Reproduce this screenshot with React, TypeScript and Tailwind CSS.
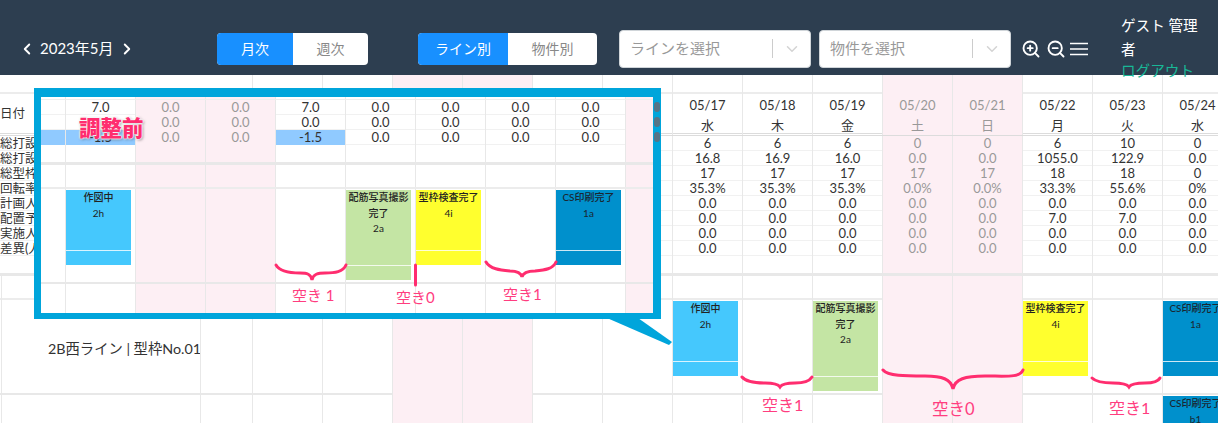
import { ChevronDown, ChevronLeft, ChevronRight, ZoomIn, ZoomOut } from 'lucide-react';
import type { ReactNode } from 'react';

const WEEKEND = [2, 3, 9, 10];

const rowLabels = ['総打設数', '総打設量(m3)', '総型枠数', '回転率(%)', '計画人数(人)', '配置予定(人)', '実施人数(人)', '差異(人)'];

const days = [
  ['', ''], ['', ''], ['', ''], ['', ''], ['', ''], ['', ''],
  ['05/17', '水'], ['05/18', '木'], ['05/19', '金'], ['05/20', '土'],
  ['05/21', '日'], ['05/22', '月'], ['05/23', '火'], ['05/24', '水'],
];

const dataRows = [
  ['6', '6', '6', '0', '0', '6', '10', '0'],
  ['16.8', '16.9', '16.0', '0.0', '0.0', '1055.0', '122.9', '0.0'],
  ['17', '17', '17', '17', '17', '18', '18', '0'],
  ['35.3%', '35.3%', '35.3%', '0.0%', '0.0%', '33.3%', '55.6%', '0%'],
  ['0.0', '0.0', '0.0', '0.0', '0.0', '0.0', '0.0', '0.0'],
  ['0.0', '0.0', '0.0', '0.0', '0.0', '7.0', '7.0', '0.0'],
  ['0.0', '0.0', '0.0', '0.0', '0.0', '0.0', '0.0', '0.0'],
  ['0.0', '0.0', '0.0', '0.0', '0.0', '0.0', '0.0', '0.0'],
];

const calloutRows = [
  ['7.0', '0.0', '0.0', '7.0', '0.0', '0.0', '0.0', '0.0', ''],
  ['', '0.0', '0.0', '0.0', '0.0', '0.0', '0.0', '0.0', ''],
  ['-1.5', '0.0', '0.0', '-1.5', '0.0', '0.0', '0.0', '0.0', ''],
];

const braces = [
  'M276 265C280 272 290 273 300 273C307 273 311 274 312 280C313 274 318 273 325 273C335 273 343 272 346 265',
  'M486 262C490 269 500 270 510 271C517 271 521 273 522 277C523 273 528 271 535 271C545 270 553 269 556 262',
  'M742 377C746 382 755 383 765 383C773 383 778 384 780 387C782 384 787 383 795 383C803 383 809 382 812 377',
  'M883 370C888 376 905 376 925 376C942 376 951 379 953 389C955 379 965 376 985 376C1005 376 1020 378 1023 370',
  'M1092 378C1096 382 1104 383 1113 383C1122 383 1127 384 1129 387C1131 384 1136 383 1145 383C1152 383 1158 382 1160 378',
];

const gaps = [
  { text: '空き 1', className: 'left-[292px] top-[284px] text-[15px]' },
  { text: '空き0', className: 'left-[396px] top-[286px] text-[15px]' },
  { text: '空き1', className: 'left-[503px] top-[283px] text-[15px]' },
  { text: '空き1', className: 'left-[762px] top-[394px] text-[16px]' },
  { text: '空き0', className: 'left-[932px] top-[398px] text-[16.5px]' },
  { text: '空き1', className: 'left-[1109px] top-[397px] text-[16px]' },
];

function Block({ title, sub, color, tall, dark }: { title: string; sub: string; color: string; tall?: boolean; dark?: boolean }) {
  return (
    <div className={`mt-px flex w-[65px] flex-col text-center text-[10px] leading-[15.5px] ${color} ${tall ? 'h-[90px]' : 'h-[75px]'} ${dark ? 'text-[#1a2630]' : 'text-[#222]'}`}>
      <div className="flex-1 font-medium">
        {title}
        <div className="font-normal">{sub}</div>
      </div>
      <div className="h-[15px] border-t border-white/80" />
    </div>
  );
}

function Toggle({ on, off, onWidth, offWidth }: { on: string; off: string; onWidth: string; offWidth: string }) {
  return (
    <div className="flex h-8 overflow-hidden rounded-[4px] bg-white text-sm">
      <div className={`flex items-center justify-center bg-[#1890ff] text-white ${onWidth}`}>{on}</div>
      <div className={`flex items-center justify-center text-[#888] ${offWidth}`}>{off}</div>
    </div>
  );
}

function SelectBox({ label, className }: { label: string; className: string }) {
  return (
    <div className={`flex h-[38px] w-[192px] items-center rounded-[4px] border border-[#d0d5d9] bg-white pl-2.5 text-[15px] text-[#999] ${className}`}>
      <span className="flex-1">{label}</span>
      <span className="h-[19px] w-px bg-[#ccc]" />
      <span className="flex w-[37px] justify-center">
        <ChevronDown size={18} className="text-[#d4d4d4]" />
      </span>
    </div>
  );
}

function Header() {
  return (
    <header className="relative z-10 flex h-[75px] items-center bg-[#2d3e50] pt-[22px] text-white">
      <div className="flex w-[217px] items-center pl-[18px] text-[15px]">
        <ChevronLeft size={18} strokeWidth={2.5} />
        <span className="mx-1">2023年5月</span>
        <ChevronRight size={18} strokeWidth={2.5} />
      </div>
      <Toggle on="月次" off="週次" onWidth="w-[76px]" offWidth="w-[75px]" />
      <div className="ml-[50px]">
        <Toggle on="ライン別" off="物件別" onWidth="w-[90px]" offWidth="w-[89px]" />
      </div>
      <SelectBox label="ラインを選択" className="ml-[22px]" />
      <SelectBox label="物件を選択" className="ml-2" />
      <div className="ml-[10px] flex w-[100px] items-center">
        <ZoomIn size={20} strokeWidth={2.25} />
        <ZoomOut size={20} strokeWidth={2.25} className="ml-[5px]" />
        <svg width="20" height="14" viewBox="0 0 20 14" className="ml-[3px]" stroke="currentColor" strokeWidth="1.6">
          <path d="M1 1.5h18M1 7h18M1 12.5h18" />
        </svg>
      </div>
      <div className="-mt-[22px] h-[75px] w-[80px] pt-[14px] text-[14.6px] leading-6">
        ゲスト 管理者
        <div className="-mt-[3px] whitespace-nowrap text-[#18b797]">ログアウト</div>
      </div>
    </header>
  );
}

function Row({ className, children }: { className?: string; children: ReactNode }) {
  return <div className={`grid grid-cols-[199px_52px_repeat(14,70px)] pl-px ${className ?? ''}`}>{children}</div>;
}

function DayCells({ className, render }: { className: string; render?: (i: number) => ReactNode }) {
  return (
    <>
      {days.map((_, i) => (
        <div
          key={i}
          className={`border-l border-[#e8e8e8] text-center ${className} ${WEEKEND.includes(i) ? 'bg-[#fdeff4] text-[#999]' : ''}`}
        >
          {render?.(i)}
        </div>
      ))}
    </>
  );
}

function Schedule() {
  return (
    <div className="text-[13px] text-[#333]">
      <Row className="h-[19px] border-b-2 border-[#ececec]">
        <div />
        <div />
        <DayCells className="h-[19px]" />
      </Row>
      <Row className="h-[42px] border-b-[3px] border-double border-[#dcdcdc]">
        <div className="-ml-px flex items-center text-[12.5px]">日付</div>
        <div />
        <DayCells
          className="pt-px leading-[20px]"
          render={(i) => (
            <>
              <div>{days[i][0]}</div>
              <div>{days[i][1]}</div>
            </>
          )}
        />
      </Row>
      {rowLabels.map((label, r) => (
        <Row key={label} className="h-[15px] border-b border-[#f1f1f1] leading-[15px]">
          <div className="-ml-px whitespace-nowrap text-[12.5px]">{label}</div>
          <div />
          <DayCells className="h-[15px]" render={(i) => (i > 5 ? dataRows[r][i - 6] : '')} />
        </Row>
      ))}
      <Row className="h-[20px] border-b-[3px] border-[#e8e8e8]">
        <div />
        <div />
        <DayCells className="h-[17px]" />
      </Row>
      <Row className="h-[24px] border-b-2 border-[#ececec]">
        <div className="border-l border-[#e8e8e8]" />
        <div className="border-l border-[#e8e8e8]" />
        <DayCells className="h-[24px]" />
      </Row>
      <Row className="h-[95px] border-b-2 border-[#e8e8e8]">
        <div className="flex items-center whitespace-nowrap border-l border-[#e8e8e8] pl-[46px] pt-0.5 text-[14.3px] text-[#333]">2B西ライン | 型枠No.01</div>
        <div className="border-l border-[#e8e8e8]" />
        <DayCells
          className="h-[95px]"
          render={(i) => {
            if (i === 6) return <Block title="作図中" sub="2h" color="bg-[#45c8fd]" />;
            if (i === 8) return <Block title="配筋写真撮影完了" sub="2a" color="bg-[#c4e5a4]" tall />;
            if (i === 11) return <Block title="型枠検査完了" sub="4i" color="bg-[#ffff2e]" />;
            if (i === 13) return <Block title="CS印刷完了" sub="1a" color="bg-[#0090cc]" dark />;
            return null;
          }}
        />
      </Row>
      <Row className="h-[28px] overflow-hidden">
        <div className="border-l border-[#e8e8e8]" />
        <div className="border-l border-[#e8e8e8]" />
        <DayCells
          className="h-[28px]"
          render={(i) => (i === 13 ? <Block title="CS印刷完了" sub="b1" color="bg-[#0090cc]" dark /> : null)}
        />
      </Row>
    </div>
  );
}

// before-adjustment snapshot pasted over the schedule
function Callout() {
  const cols = 'grid grid-cols-[24px_repeat(8,70px)_28px]';
  const isPink = (i: number) => i === 1 || i === 2 || i === 8;
  const cell = (i: number) => `border-l border-[#e8e8e8] ${isPink(i) ? 'bg-[#fdeff4] text-[#999]' : ''}`;
  const blank = Array.from({ length: 9 }, (_, i) => i);

  return (
    <div className="absolute left-[34px] top-[88px] z-20 h-[231px] w-[627px] overflow-hidden border-b-[6px] border-l-[7px] border-r-[8px] border-t-[9px] border-[#00a5db] bg-white text-[13px] text-[#333]">
      <div className={`${cols} h-[3px] border-b border-[#eee]`}>
        <div />
        {blank.map((i) => (
          <div key={i} className={cell(i)} />
        ))}
      </div>
      {calloutRows.map((row, r) => (
        <div key={r} className={`${cols} h-[15px] border-b border-[#f1f1f1] leading-[15px]`}>
          <div className={r === 2 ? 'bg-[#90caff]' : ''} />
          {row.map((value, i) => (
            <div key={i} className={`text-center ${cell(i)} ${value === '-1.5' ? 'bg-[#90caff]' : ''}`}>
              {value}
            </div>
          ))}
        </div>
      ))}
      <div className={`${cols} h-[20px] border-b-[3px] border-[#e8e8e8]`}>
        <div />
        {blank.map((i) => (
          <div key={i} className={cell(i)} />
        ))}
      </div>
      <div className={`${cols} h-[24px] border-b-2 border-[#ececec]`}>
        <div />
        {blank.map((i) => (
          <div key={i} className={cell(i)} />
        ))}
      </div>
      <div className={`${cols} h-[95px] border-b-2 border-[#e8e8e8]`}>
        <div />
        {blank.map((i) => (
          <div key={i} className={`${cell(i)} text-center`}>
            {i === 0 && <Block title="作図中" sub="2h" color="bg-[#45c8fd]" />}
            {i === 4 && <Block title="配筋写真撮影完了" sub="2a" color="bg-[#c4e5a4]" tall />}
            {i === 5 && <Block title="型枠検査完了" sub="4i" color="bg-[#ffff2e]" />}
            {i === 7 && <Block title="CS印刷完了" sub="1a" color="bg-[#0090cc]" dark />}
          </div>
        ))}
      </div>
      <div className={`${cols} h-[29px]`}>
        <div />
        {blank.map((i) => (
          <div key={i} className={cell(i)} />
        ))}
      </div>
    </div>
  );
}

function Annotations() {
  return (
    <>
      <svg width="1218" height="423" viewBox="0 0 1218 423" className="absolute left-0 top-0 z-10" fill="none">
        <path d="M607 318L638 318L672 342L669 345Z" fill="#00a5db" />
      </svg>
      <svg width="1218" height="423" viewBox="0 0 1218 423" className="pointer-events-none absolute left-0 top-0 z-30" fill="none" stroke="#ff2d6f" strokeWidth="3" strokeLinecap="round">
        {braces.map((d) => (
          <path key={d} d={d} />
        ))}
        <path d="M415.5 265V285" />
      </svg>
      {gaps.map((gap, i) => (
        <span key={i} className={`absolute z-30 whitespace-nowrap leading-[22px] text-[#ff3d7f] ${gap.className}`}>
          {gap.text}
        </span>
      ))}
      <span className="absolute left-[79px] top-[114px] z-30 text-[21.5px] font-black leading-[28px] text-[#ff2d6f] [text-shadow:0_0_2px_#fff,0_0_2px_#fff,0_0_2px_#fff,1px_1px_3px_rgba(0,0,0,0.5)]">
        調整前
      </span>
      {['top-[102px]', 'top-[117px]', 'top-[132px]'].map((top) => (
        <span key={top} className={`absolute left-[654px] z-30 h-[10px] w-[6px] rounded-full bg-[#567486] ${top}`} />
      ))}
    </>
  );
}

export default function App() {
  return (
    <div className="relative h-[423px] w-[1218px] overflow-hidden bg-white font-['Lato','Noto_Sans_CJK_JP',sans-serif]">
      <Header />
      <Schedule />
      <Callout />
      <Annotations />
    </div>
  );
}
